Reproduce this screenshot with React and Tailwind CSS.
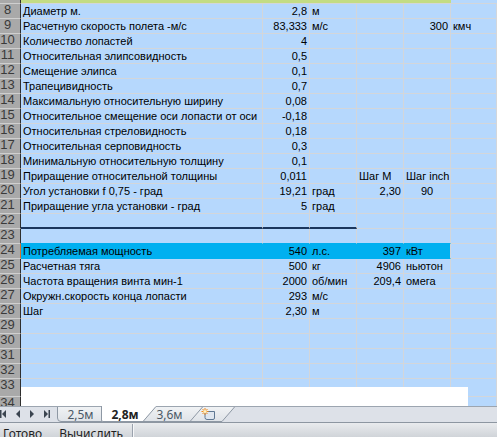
import React from "react";

const rows = [
  { n: 8, b: "Диаметр м.", c: "2,8", d: "м" },
  { n: 9, b: "Расчетную скорость полета -м/с", c: "83,333", d: "м/с", f: "300", fa: "r", g: "кмч" },
  { n: 10, b: "Количество лопастей", c: "4" },
  { n: 11, b: "Относительная элипсовидность", c: "0,5" },
  { n: 12, b: "Смещение элипса", c: "0,1" },
  { n: 13, b: "Трапецивидность", c: "0,7" },
  { n: 14, b: "Максимальную относительную ширину", c: "0,08" },
  { n: 15, b: "Относительное смещение оси лопасти от оси", c: "-0,18" },
  { n: 16, b: "Относительная стреловидность", c: "0,18" },
  { n: 17, b: "Относительная серповидность", c: "0,3" },
  { n: 18, b: "Минимальную относительную толщину", c: "0,1" },
  { n: 19, b: "Приращение относительной толщины", c: "0,011", e: "Шаг М", ea: "l", f: "Шаг inch", fa: "l" },
  { n: 20, b: "Угол установки f 0,75 - град", c: "19,21", d: "град", e: "2,30", ea: "r", f: "90", fa: "c" },
  { n: 21, b: "Приращение угла установки - град", c: "5", d: "град" },
  { n: 22, thick: true },
  { n: 23, pre: true },
  { n: 24, b: "Потребляемая мощность", c: "540", d: "л.с.", e: "397", ea: "r", f: "кВт", fa: "l", hl: true },
  { n: 25, b: "Расчетная тяга", c: "500", d: "кг", e: "4906", ea: "r", f: "ньютон", fa: "l" },
  { n: 26, b: "Частота вращения винта мин-1", c: "2000", d: "об/мин", e: "209,4", ea: "r", f: "омега", fa: "l" },
  { n: 27, b: "Окружн.скорость конца лопасти", c: "293", d: "м/с" },
  { n: 28, b: "Шаг", c: "2,30", d: "м" },
  { n: 29 },
  { n: 30 },
  { n: 31 },
  { n: 32 },
  { n: 33, tall: true },
  { n: 34 },
];

const alignCls = {
  l: "justify-start",
  r: "justify-end",
  c: "justify-center",
};

function Cell({ w, text, align = "l", bg, border, extra = "" }) {
  return (
    <div
      className={`flex h-full shrink-0 items-center overflow-hidden whitespace-nowrap border-r border-b px-[2px] leading-[14px] ${alignCls[align]} ${w} ${bg} ${border} ${extra}`}
    >
      {text}
    </div>
  );
}

function Row({ r }) {
  const h = r.tall ? "h-[18px]" : r.n === 34 ? "h-[20px]" : "h-[15px]";
  const hl = r.hl;
  const bgHl = hl ? "bg-[#00b0f0]" : "bg-[#b6d8fd]";
  const bdHl = hl ? "border-[#00b0f0]" : "border-[#d3d6da]";
  const base = "bg-[#b6d8fd]";
  const gb = "border-[#d3d6da]";
  let bcdBorder = bdHl;
  let bcdExtra = "";
  if (r.thick) {
    bcdBorder = "border-r-[#d3d6da] border-b-[#1b365d]";
    bcdExtra = "border-b-2";
  }
  if (r.pre) {
    bcdBorder = "border-r-[#d3d6da] border-b-[#00b0f0]";
  }
  const efBorder = r.pre ? "border-r-[#d3d6da] border-b-[#00b0f0]" : bdHl;
  return (
    <div className={`flex ${h} shrink-0`}>
      <div
        className={`flex h-full w-[21px] shrink-0 items-start border-r border-b border-b-[#cfcfcf] bg-[#a9a9a9] ${
          hl ? "border-r-[#d9702c]" : "border-r-[#2e2e2e]"
        }`}
      >
        <span className="w-[15px] text-center font-['Liberation_Sans',Arial,sans-serif] text-[13px] leading-[12px] text-[#3a3a3a]">
          {r.n}
        </span>
      </div>
      <Cell w="w-[242px]" text={r.b} bg={bgHl} border={bcdBorder} extra={bcdExtra} />
      <Cell w="w-[47px]" text={r.c} align="r" bg={bgHl} border={bcdBorder} extra={bcdExtra} />
      <Cell w="w-[47px]" text={r.d} bg={bgHl} border={bcdBorder} extra={bcdExtra} />
      <Cell w="w-[47px]" text={r.e} align={r.ea || "l"} bg={bgHl} border={efBorder} />
      <Cell
        w="w-[47px]"
        text={r.f}
        align={r.fa || "l"}
        bg={bgHl}
        border={hl ? "border-r-[#d3d6da] border-b-[#00b0f0]" : efBorder}
      />
      <Cell w="flex-1" text={r.g} bg={base} border={gb} />
    </div>
  );
}

function NavIcons() {
  return (
    <div className="flex h-full w-[57px] shrink-0 items-center">
      <svg width="57" height="16" viewBox="0 0 57 16">
        <g fill="#3b4550">
          <rect x="0" y="4" width="1.5" height="8" />
          <path d="M6 4 L2 8 L6 12 Z" />
          <path d="M20 4 L16 8 L20 12 Z" />
          <path d="M30 4 L34 8 L30 12 Z" />
          <path d="M44 4 L48 8 L44 12 Z" />
          <rect x="48.5" y="4" width="1.5" height="8" />
        </g>
      </svg>
    </div>
  );
}

function TabShapes() {
  return (
    <svg className="absolute inset-0" width="497" height="17" viewBox="0 0 497 17">
      <defs>
        <linearGradient id="inact" x1="0" y1="0" x2="0" y2="1">
          <stop offset="0" stopColor="#f1f3f5" />
          <stop offset="1" stopColor="#dfe3e8" />
        </linearGradient>
      </defs>
      <path d="M57.5 0 V12 Q57.5 15.5 61 15.5 H104 V0 Z" fill="url(#inact)" />
      <path d="M57.5 0.5 V12 Q57.5 15.5 61 15.5 H102" fill="none" stroke="#8e98a4" />
      <path d="M101.5 0 V14 Q101.5 15.5 103 15.5 H143 L156 0 Z" fill="#ffffff" />
      <path d="M101.5 0 V14 Q101.5 15.5 103 15.5 H143" fill="none" stroke="#8e98a4" />
      <path d="M156 0 L143 15.5 H190 L203 0 Z" fill="url(#inact)" />
      <path d="M156 0.5 L143 15.5 H190" fill="none" stroke="#8e98a4" />
      <path d="M203 0 L190 15.5 H222 L235 0 Z" fill="url(#inact)" />
      <path d="M203 0.5 L190 15.5 H222 L235 0.5" fill="none" stroke="#8e98a4" />
      <line x1="0" y1="0.5" x2="101" y2="0.5" stroke="#9ca5b0" />
      <line x1="156" y1="0.5" x2="497" y2="0.5" stroke="#9ca5b0" />
    </svg>
  );
}

function InsertIcon() {
  return (
    <svg width="16" height="13" viewBox="0 0 16 13">
      <path d="M4 3.5 H13.5 V10 Q13.5 11.5 12 11.5 H6 Q4 11.5 4 9.5 Z" fill="#dfe6ef" stroke="#5f7893" />
      <g stroke="#f08a1c" strokeWidth="1">
        <line x1="4" y1="0" x2="4" y2="7" />
        <line x1="0.5" y1="3.5" x2="7.5" y2="3.5" />
        <line x1="1.5" y1="1" x2="6.5" y2="6" />
        <line x1="6.5" y1="1" x2="1.5" y2="6" />
      </g>
      <circle cx="4" cy="3.5" r="1.6" fill="#fff3c0" />
    </svg>
  );
}

export default function App() {
  return (
    <div className="relative h-[437px] w-[497px] overflow-hidden bg-white font-['Liberation_Sans',Arial,sans-serif] text-[11px] text-black">
      <div className="relative flex h-[406px] flex-col overflow-hidden">
        <div className="flex h-[4px] shrink-0">
          <div className="h-full w-[21px] shrink-0 border-r border-r-[#2e2e2e] border-b border-b-[#cfcfcf] bg-[#a9a9a9]" />
          <div className="h-full w-[430px] shrink-0 border-b border-[#d3d6da] bg-[#c3dc84]" />
          <div className="h-full flex-1 border-b border-[#d3d6da] bg-[#b6d8fd]" />
        </div>
        {rows.map((r) => (
          <Row key={r.n} r={r} />
        ))}
        <div className="absolute left-[21px] top-[387px] h-[19px] w-[447px] bg-white" />
      </div>

      <div className="relative flex h-[17px] items-center border-b border-[#8d96a1] bg-[#dde1e8] font-['Noto_Sans','Open_Sans',sans-serif] text-[12px]">
        <TabShapes />
        <div className="relative flex h-full items-center">
          <NavIcons />
          <div className="w-[44px] pl-[3px] text-center leading-[15px] text-[#4b5866]">2,5м</div>
          <div className="w-[48px] text-center font-bold leading-[15px] text-[#222]">2,8м</div>
          <div className="w-[41px] text-center leading-[15px] text-[#4b5866]">3,6м</div>
          <div className="ml-[11px] flex h-full w-[18px] items-center pt-[1px]">
            <InsertIcon />
          </div>
        </div>
      </div>

      <div className="flex h-[14px] overflow-hidden bg-gradient-to-b from-[#e9ebee] to-[#d0d4d9] font-['Noto_Sans','Open_Sans',sans-serif] text-[12px] text-[#1e1e1e]">
        <div className="pl-[3px] pt-[3px] leading-[16px]">Готово</div>
        <div className="pl-[17px] pt-[3px] leading-[16px]">Вычислить</div>
        <div className="ml-[9px] mt-[1px] h-full w-[2px] border-l border-r border-l-[#9aa2ad] border-r-[#f6f7f9]" />
      </div>
    </div>
  );
}
